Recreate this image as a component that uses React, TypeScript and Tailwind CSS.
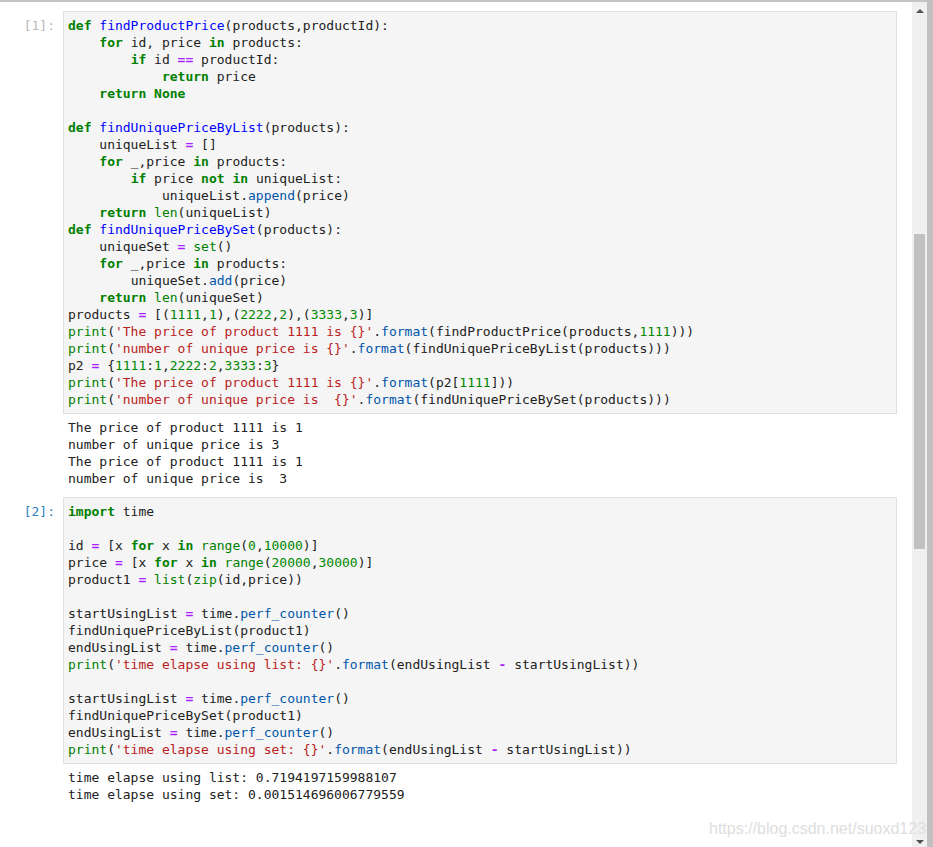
import React from 'react';

const KEYWORDS = new Set(['def', 'for', 'in', 'if', 'return', 'None', 'import', 'not']);
const BUILTINS = new Set(['print', 'len', 'set', 'list', 'zip', 'range']);

const cell1 = `def findProductPrice(products,productId):
    for id, price in products:
        if id == productId:
            return price
    return None

def findUniquePriceByList(products):
    uniqueList = []
    for _,price in products:
        if price not in uniqueList:
            uniqueList.append(price)
    return len(uniqueList)
def findUniquePriceBySet(products):
    uniqueSet = set()
    for _,price in products:
        uniqueSet.add(price)
    return len(uniqueSet)
products = [(1111,1),(2222,2),(3333,3)]
print('The price of product 1111 is {}'.format(findProductPrice(products,1111)))
print('number of unique price is {}'.format(findUniquePriceByList(products)))
p2 = {1111:1,2222:2,3333:3}
print('The price of product 1111 is {}'.format(p2[1111]))
print('number of unique price is  {}'.format(findUniquePriceBySet(products)))`;

const output1 = `The price of product 1111 is 1
number of unique price is 3
The price of product 1111 is 1
number of unique price is  3`;

const cell2 = `import time

id = [x for x in range(0,10000)]
price = [x for x in range(20000,30000)]
product1 = list(zip(id,price))

startUsingList = time.perf_counter()
findUniquePriceByList(product1)
endUsingList = time.perf_counter()
print('time elapse using list: {}'.format(endUsingList - startUsingList))

startUsingList = time.perf_counter()
findUniquePriceBySet(product1)
endUsingList = time.perf_counter()
print('time elapse using set: {}'.format(endUsingList - startUsingList))`;

const output2 = `time elapse using list: 0.7194197159988107
time elapse using set: 0.001514696006779559`;

// very small python highlighter, enough for these two cells
const highlight = (line: string) => {
  const re = /('[^']*')|(\d+)|([A-Za-z_]\w*)|(==|=|-)|(\s+)|(.)/g;
  const parts: React.ReactNode[] = [];
  let prevWord = '';
  let prevChar = '';
  let m: RegExpExecArray | null;
  let i = 0;
  while ((m = re.exec(line)) !== null) {
    const t = m[0];
    let cls = 'text-[#212121]';
    if (m[1]) cls = 'text-[#ba2121]';
    else if (m[2]) cls = 'text-[#008800]';
    else if (m[3]) {
      if (prevWord === 'def') cls = 'text-[#0000ff]';
      else if (prevChar === '.') cls = 'text-[#0055aa]';
      else if (KEYWORDS.has(t)) cls = 'text-[#008000] font-bold';
      else if (BUILTINS.has(t)) cls = 'text-[#008000]';
    } else if (m[4]) cls = 'text-[#aa22ff] font-bold';

    parts.push(
      <span key={i++} className={cls}>
        {t}
      </span>
    );
    if (m[5]) continue;
    prevWord = m[3] ? t : '';
    prevChar = t;
  }
  return parts;
};

const CodeCell = ({
  n,
  code,
  output,
  active,
}: {
  n: number;
  code: string;
  output: string;
  active?: boolean;
}) => (
  <div>
    <div className="flex">
      <div
        className={`w-[63px] shrink-0 pr-[8px] pt-[6px] text-right ${
          active ? 'text-[#307fc1]' : 'text-[#b8b8b8]'
        }`}
      >
        [{n}]:
      </div>
      <div className="flex-1 border border-[#e0e0e0] bg-[#f5f5f5] px-[4px] py-[5px]">
        {code.split('\n').map((line, idx) => (
          <div key={idx} className="h-[17px] whitespace-pre">
            {line ? highlight(line) : ' '}
          </div>
        ))}
      </div>
    </div>
    <div className="pl-[68px] pt-[5px] pb-[10px] text-[#212121]">
      {output.split('\n').map((line, idx) => (
        <div key={idx} className="h-[17px] whitespace-pre">
          {line}
        </div>
      ))}
    </div>
  </div>
);

const App = () => {
  return (
    <div className="relative flex h-[847px] w-[933px] overflow-hidden bg-white">
      <div className="flex flex-1 flex-col border-t-2 border-[#c4c4c4]">
        <div className="flex flex-1">
          {/* notebook */}
          <div
            className="flex-1 pt-[9px] pr-[15px] text-[13px] leading-[17px]"
            style={{ fontFamily: '"DejaVu Sans Mono", monospace' }}
          >
            <CodeCell n={1} code={cell1} output={output1} />
            <CodeCell n={2} code={cell2} output={output2} active />
          </div>

          {/* scrollbar */}
          <div className="flex w-[15px] flex-col items-center bg-[#f0f0f0]">
            <div className="mt-[7px] h-0 w-0 border-x-[4px] border-b-[4px] border-x-transparent border-b-[#505050]" />
            <div className="mt-[221px] h-[315px] w-[11px] bg-[#c1c1c1]" />
            <div className="flex-1" />
            <div className="mb-[3px] h-0 w-0 border-x-[4px] border-t-[4px] border-x-transparent border-t-[#505050]" />
          </div>
        </div>
      </div>
      <div className="w-[6px] bg-[#c0c0c0]" />

      {/* watermark */}
      <div
        className="absolute left-[709px] top-[819px] text-[16px] leading-[20px] text-[#dedede]"
        style={{ fontFamily: '"Liberation Sans", Arial, sans-serif' }}
      >
        https://blog.csdn.net/suoxd123
      </div>
    </div>
  );
};

export default App;
